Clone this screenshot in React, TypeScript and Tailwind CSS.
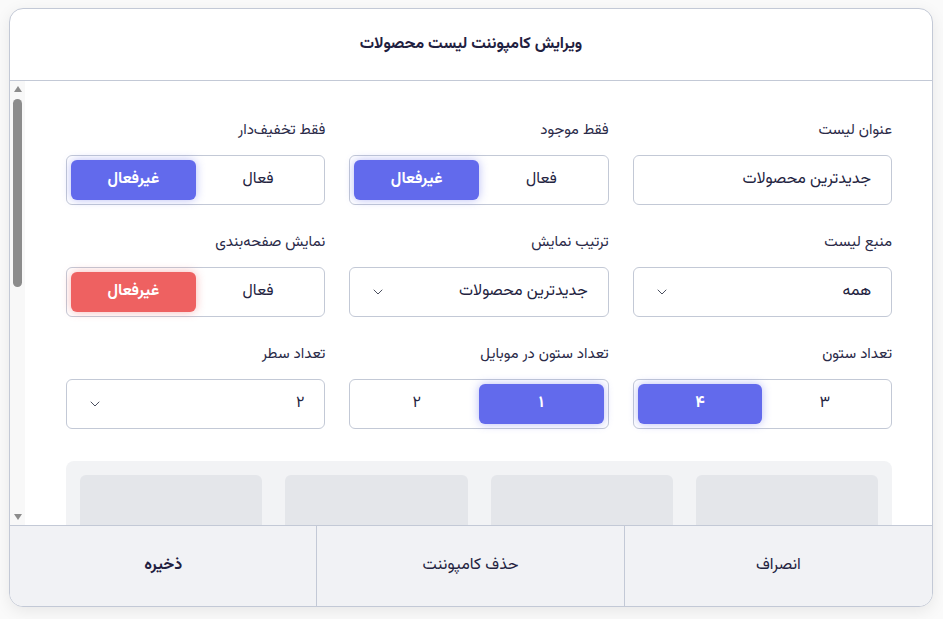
import { ChevronDown } from 'lucide-react';

const font = { fontFamily: '"Vazirmatn", "DejaVu Sans", sans-serif' };

function Label({ children }: { children: React.ReactNode }) {
  return <div className="mb-3.5 h-5 text-[15px] leading-5 text-[#2a2a48]">{children}</div>;
}

function Segmented({
  items,
  active,
  tone = 'indigo',
}: {
  items: string[];
  active: number;
  tone?: 'indigo' | 'red';
}) {
  return (
    <div className="flex h-[50px] rounded-md border border-[#c3c9d6] bg-white p-1">
      {items.map((item, i) => (
        <button
          key={item}
          className={
            i === active
              ? tone === 'red'
                ? 'flex-1 rounded-md bg-[#ee6161] text-base font-bold text-white shadow-[0_0_10px_rgba(238,97,97,0.45)]'
                : 'flex-1 rounded-md bg-[#626aec] text-base font-bold text-white shadow-[0_0_10px_rgba(98,106,236,0.45)]'
              : 'flex-1 rounded-md text-base text-[#23233f]'
          }
        >
          {item}
        </button>
      ))}
    </div>
  );
}

function Select({ value }: { value: string }) {
  return (
    <div className="flex h-[50px] items-center justify-between rounded-md border border-[#c3c9d6] bg-white px-5">
      <span className="text-base text-[#23233f]">{value}</span>
      <ChevronDown className="h-4 w-4 text-[#4b5060]" strokeWidth={1.5} />
    </div>
  );
}

function TextInput({ value }: { value: string }) {
  return (
    <div className="flex h-[50px] items-center rounded-md border border-[#c3c9d6] bg-white px-5">
      <span className="text-base text-[#23233f]">{value}</span>
    </div>
  );
}

// drawn scrollbar (left side, RTL page)
function ScrollStrip() {
  return (
    <div className="flex w-[15px] shrink-0 flex-col items-center bg-[#f8f8f8]">
      <div className="flex h-[16px] w-full items-center justify-center">
        <div className="h-0 w-0 border-x-[4px] border-b-[6px] border-x-transparent border-b-[#8c8c8c]" />
      </div>
      <div className="mt-[2px] h-[188px] w-[9px] rounded-full bg-[#8c8c8c]" />
      <div className="flex-1" />
      <div className="flex h-[16px] w-full items-center justify-center">
        <div className="h-0 w-0 border-x-[4px] border-t-[6px] border-x-transparent border-t-[#8c8c8c]" />
      </div>
    </div>
  );
}

export default function App() {
  return (
    <div style={font} className="h-[619px] w-[943px] bg-[#fafafa] pl-[9px] pt-2">
      <div
        dir="rtl"
        className="flex h-[599px] w-[924px] flex-col overflow-hidden rounded-[14px] border border-[#c3c9d6] bg-white shadow-[0_4px_16px_rgba(0,0,0,0.08)]"
      >
        {/* Header */}
        <div className="flex h-[72px] shrink-0 items-center justify-center border-b border-[#c3c9d6]">
          <h2 className="text-base font-bold text-[#1f2040]">ویرایش کامپوننت لیست محصولات</h2>
        </div>

        {/* Body */}
        <div dir="ltr" className="flex min-h-0 flex-1">
          <ScrollStrip />
          <div dir="rtl" className="min-w-0 flex-1 overflow-hidden pb-10 pl-[41px] pr-10 pt-10">
            <div className="grid grid-cols-3 gap-x-6 gap-y-7">
              <div>
                <Label>عنوان لیست</Label>
                <TextInput value="جدیدترین محصولات" />
              </div>
              <div>
                <Label>فقط موجود</Label>
                <Segmented items={['فعال', 'غیرفعال']} active={1} />
              </div>
              <div>
                <Label>فقط تخفیف‌دار</Label>
                <Segmented items={['فعال', 'غیرفعال']} active={1} />
              </div>

              <div>
                <Label>منبع لیست</Label>
                <Select value="همه" />
              </div>
              <div>
                <Label>ترتیب نمایش</Label>
                <Select value="جدیدترین محصولات" />
              </div>
              <div>
                <Label>نمایش صفحه‌بندی</Label>
                <Segmented items={['فعال', 'غیرفعال']} active={1} tone="red" />
              </div>

              <div>
                <Label>تعداد ستون</Label>
                <Segmented items={['۳', '۴']} active={1} />
              </div>
              <div>
                <Label>تعداد ستون در موبایل</Label>
                <Segmented items={['۱', '۲']} active={0} />
              </div>
              <div>
                <Label>تعداد سطر</Label>
                <Select value="۲" />
              </div>
            </div>

            {/* Preview */}
            <div className="mt-8 grid grid-cols-4 gap-[23px] rounded-lg bg-[#f2f3f5] p-3.5">
              {Array.from({ length: 8 }).map((_, i) => (
                <div key={i} className="h-[250px] rounded-md bg-[#e4e6ea]" />
              ))}
            </div>
          </div>
        </div>

        {/* Footer */}
        <div className="grid h-[81px] shrink-0 grid-cols-3 border-t border-[#c3c9d6] bg-[#f1f2f5]">
          <button className="text-base text-[#23233f]">انصراف</button>
          <button className="border-r border-[#c3c9d6] text-base text-[#23233f]">حذف کامپوننت</button>
          <button className="border-r border-[#c3c9d6] text-base font-bold text-[#1f2040]">ذخیره</button>
        </div>
      </div>
    </div>
  );
}
